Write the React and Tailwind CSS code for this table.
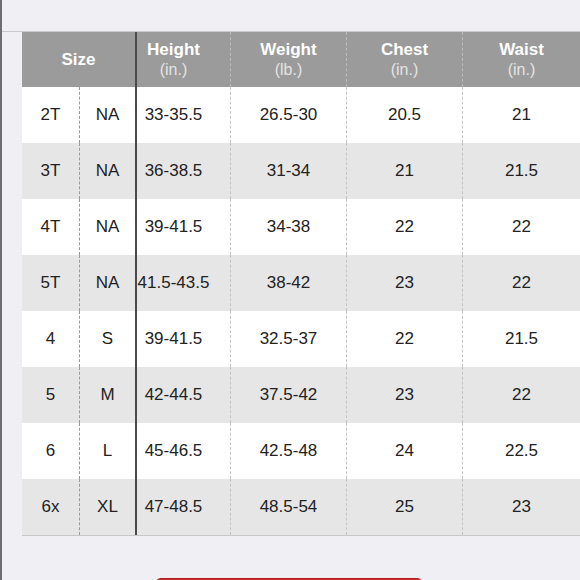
const rows = [
  ['2T', 'NA', '33-35.5', '26.5-30', '20.5', '21'],
  ['3T', 'NA', '36-38.5', '31-34', '21', '21.5'],
  ['4T', 'NA', '39-41.5', '34-38', '22', '22'],
  ['5T', 'NA', '41.5-43.5', '38-42', '23', '22'],
  ['4', 'S', '39-41.5', '32.5-37', '22', '21.5'],
  ['5', 'M', '42-44.5', '37.5-42', '23', '22'],
  ['6', 'L', '45-46.5', '42.5-48', '24', '22.5'],
  ['6x', 'XL', '47-48.5', '48.5-54', '25', '23'],
];

function HeadCell({ title, unit, className }) {
  return (
    <div className={`flex flex-col items-center justify-center leading-[20px] ${className}`}>
      <span className="font-bold text-white text-[17px]">{title}</span>
      <span className="text-[16px] text-[#e4e4e4]">{unit}</span>
    </div>
  );
}

export default function App() {
  return (
    <div
      className="w-[580px] h-[580px] overflow-hidden bg-[#efeff4] border-l-2 border-[#6d6d72] flex flex-col"
      style={{ fontFamily: '"Liberation Sans", Arial, sans-serif' }}
    >
      <div className="h-[32px] shrink-0 border-b border-[#c8c7cc]" />
      <div className="pl-[20px] shrink-0">
        <div className="border-b border-[#c8c7cc]">
          <div className="flex h-[55px] bg-[#9b9b9b]">
            <div className="w-[113px] flex items-center justify-center font-bold text-white text-[17px]">Size</div>
            <div className="w-[2px] bg-[#4a4a4a]" />
            <HeadCell title="Height" unit="(in.)" className="w-[94px] pr-[20px] border-r border-dashed border-[#bdbdbd]" />
            <HeadCell title="Weight" unit="(lb.)" className="w-[116px] border-r border-dashed border-[#bdbdbd]" />
            <HeadCell title="Chest" unit="(in.)" className="w-[116px] border-r border-dashed border-[#bdbdbd]" />
            <HeadCell title="Waist" unit="(in.)" className="w-[117px]" />
          </div>
          {rows.map((r, i) => (
            <div
              key={i}
              className={`flex h-[56px] text-[17px] text-[#222] ${i % 2 ? 'bg-[#e6e6e6]' : 'bg-white'}`}
            >
              <div className="w-[58px] flex items-center justify-center border-r border-dashed border-[#9a9a9a]">{r[0]}</div>
              <div className="w-[55px] flex items-center justify-center">{r[1]}</div>
              <div className="w-[2px] bg-[#4a4a4a]" />
              <div className="w-[94px] pr-[20px] flex items-center justify-center whitespace-nowrap border-r border-dashed border-[#c4c4c4]">{r[2]}</div>
              <div className="w-[116px] flex items-center justify-center border-r border-dashed border-[#c4c4c4]">{r[3]}</div>
              <div className="w-[116px] flex items-center justify-center border-r border-dashed border-[#c4c4c4]">{r[4]}</div>
              <div className="w-[117px] flex items-center justify-center">{r[5]}</div>
            </div>
          ))}
        </div>
      </div>
      <div className="mt-[42px] ml-[153px] w-[268px] h-[44px] shrink-0 rounded-[6px] bg-[#cf2f2c] border border-[#b02020]" />
    </div>
  );
}
